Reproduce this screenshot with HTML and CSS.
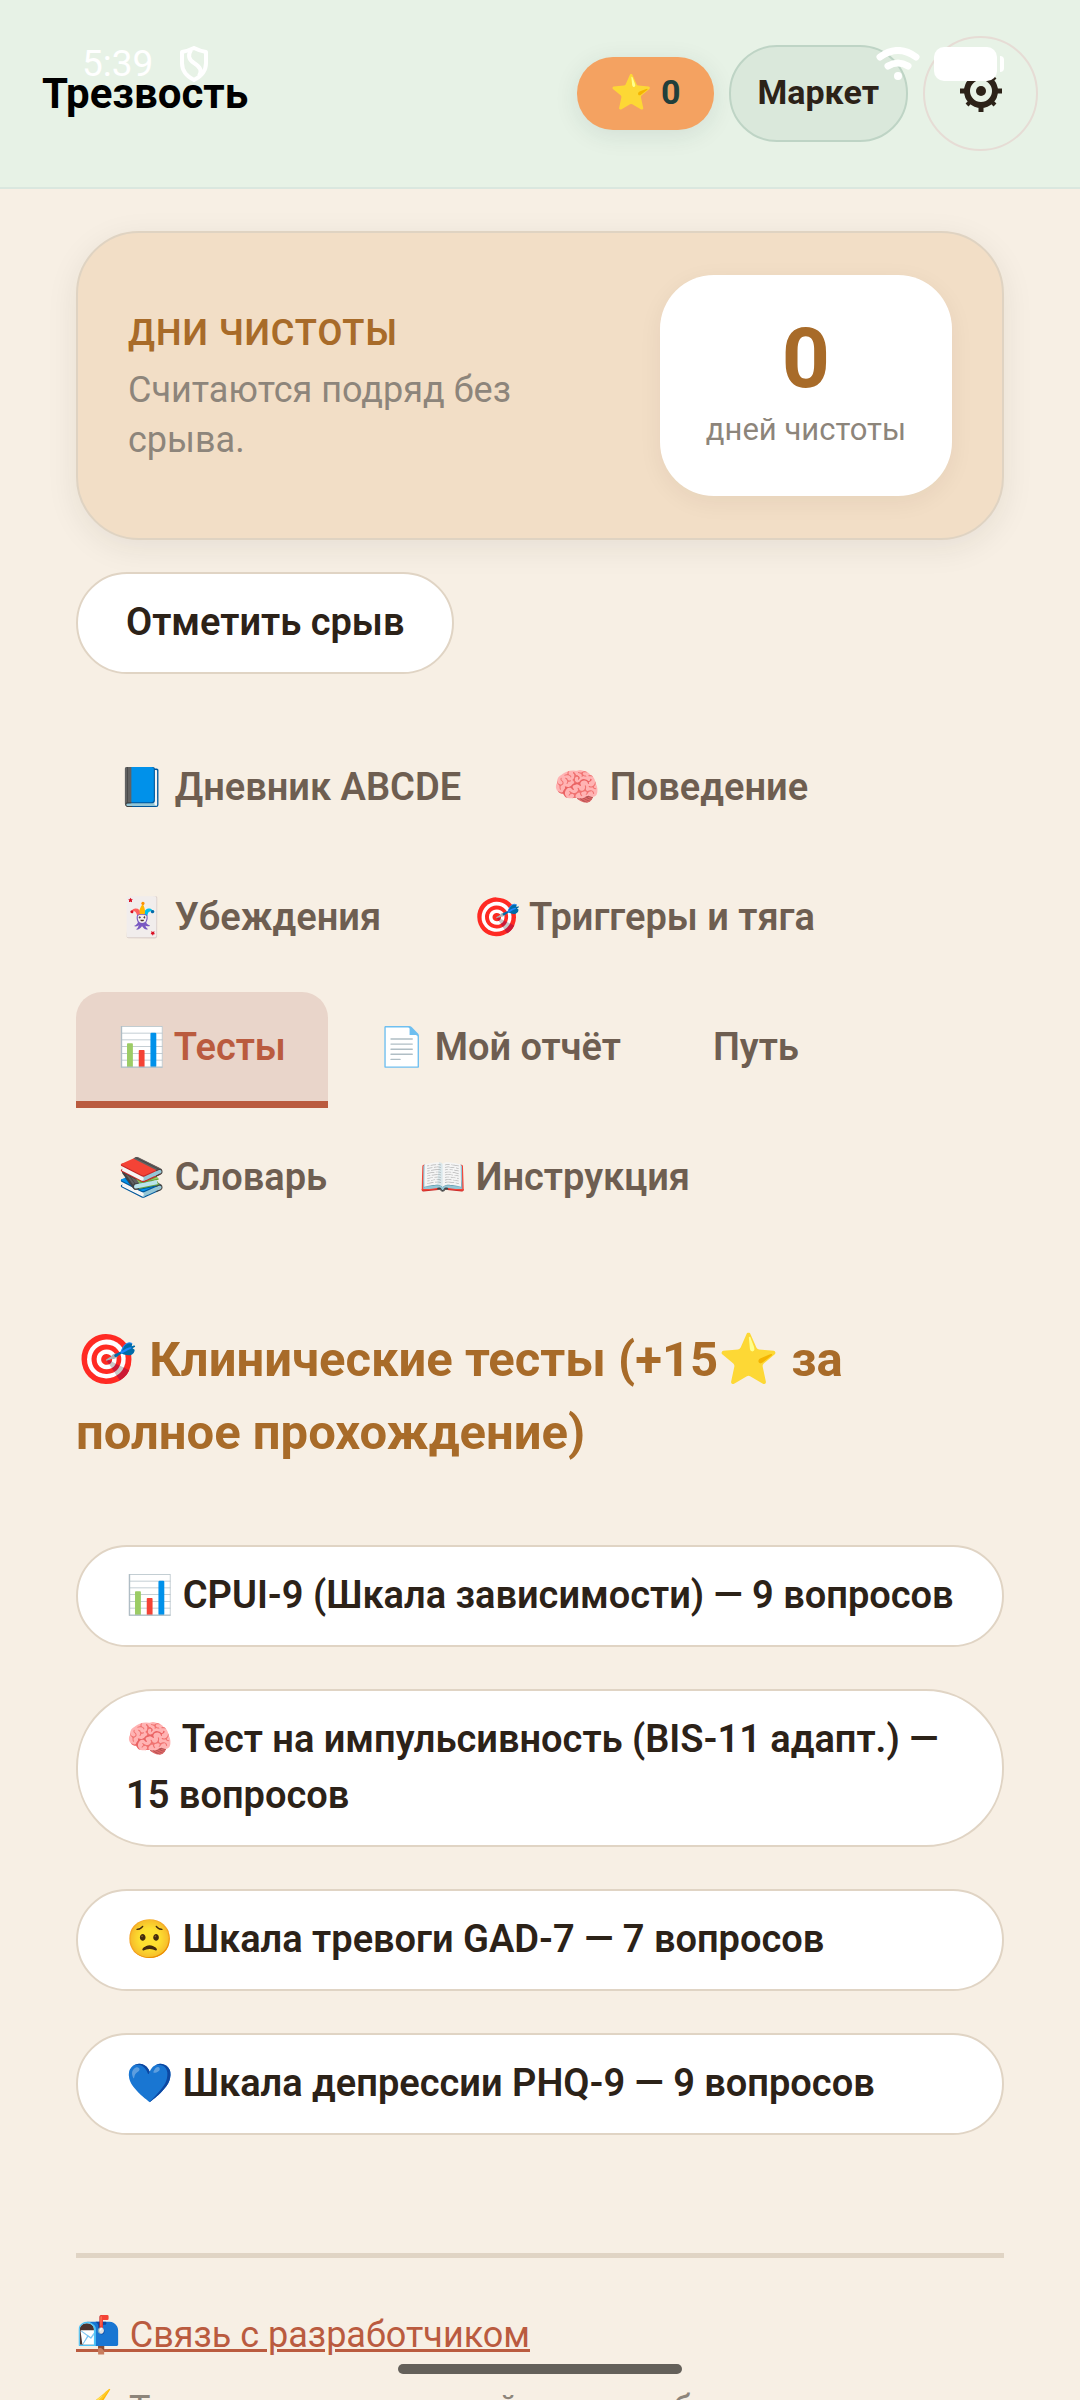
FILE: index.html
```html
<!DOCTYPE html>
<html lang="ru">
<head>
  <meta charset="UTF-8">
  <meta name="viewport" content="width=device-width, initial-scale=1.0">
  <title>Трезвость</title>
  <link rel="stylesheet" href="styles.css">
</head>
<body>
  <div class="status-bar">
    <span class="clock">5:39</span>
    <svg class="status-shield" viewBox="0 0 30 36" fill="none" stroke="currentColor" stroke-width="4" stroke-linejoin="round">
      <path d="M15 2 Q9 5 3 6 V17 Q3 28 15 34 Q27 28 27 17 V6 Q21 5 15 2 Z"/>
      <path d="M12 4 Q7 12 15 17 Q25 23 20 30"/>
    </svg>
    <svg class="status-wifi" viewBox="0 0 44 34" fill="none" stroke="currentColor" stroke-width="7" stroke-linecap="round">
      <path d="M4 10 Q22 -3 40 10"/>
      <path d="M12 19 Q22 13 32 19"/>
      <circle cx="22" cy="29" r="4" fill="currentColor" stroke="none"/>
    </svg>
    <svg class="status-battery" viewBox="0 0 70 34" fill="currentColor">
      <rect width="63" height="34" rx="10"/>
      <path d="M66 9 Q70 9 70 13 V21 Q70 25 66 25 Z"/>
    </svg>
  </div>

  <header class="topbar">
    <div class="brand">Трезвость</div>
    <div class="topbar-actions">
      <span class="stars">⭐ 0</span>
      <button type="button" class="market-btn">Маркет</button>
      <button type="button" class="settings-btn" aria-label="Настройки">
        <svg viewBox="0 0 42 42" fill="none" stroke="currentColor">
          <circle cx="21" cy="21" r="14" stroke-width="6"/>
          <path stroke-width="5" d="M21 0V6M21 36V42M0 21H6M36 21H42"/>
          <path stroke-width="4" d="M7 7L11 11M31 31L35 35M35 7L31 11M11 31L7 35"/>
          <circle cx="21" cy="21" r="5" fill="currentColor" stroke="none"/>
        </svg>
      </button>
    </div>
  </header>

  <main class="container">
    <section class="streak-card">
      <div class="streak-info">
        <div class="streak-title">ДНИ ЧИСТОТЫ</div>
        <p class="streak-text">Считаются подряд без срыва.</p>
      </div>
      <div class="streak-counter">
        <div class="streak-number">0</div>
        <div class="streak-label">дней чистоты</div>
      </div>
    </section>
    <button type="button" class="btn">Отметить срыв</button>

    <nav class="tabs">
      <button type="button" class="tab">📘 Дневник ABCDE</button>
      <button type="button" class="tab">🧠 Поведение</button>
      <button type="button" class="tab">🃏 Убеждения</button>
      <button type="button" class="tab">🎯 Триггеры и тяга</button>
      <button type="button" class="tab active">📊 Тесты</button>
      <button type="button" class="tab">📄 Мой отчёт</button>
      <button type="button" class="tab">Путь</button>
      <button type="button" class="tab">📚 Словарь</button>
      <button type="button" class="tab">📖 Инструкция</button>
    </nav>

    <section class="tests">
      <h2>🎯 Клинические тесты (+15⭐ за полное прохождение)</h2>
      <div class="test-list">
        <button type="button" class="btn">📊 CPUI-9 (Шкала зависимости) — 9 вопросов</button>
        <button type="button" class="btn">🧠 Тест на импульсивность (BIS-11 адапт.) — 15 вопросов</button>
        <button type="button" class="btn">😟 Шкала тревоги GAD-7 — 7 вопросов</button>
        <button type="button" class="btn">💙 Шкала депрессии PHQ-9 — 9 вопросов</button>
      </div>
    </section>

    <footer class="footer">
      <a href="#contact">📬 Связь с разработчиком</a>
      <p>⚡ Терапия зависимостей через работу</p>
    </footer>
  </main>

  <div class="home-indicator"></div>
</body>
</html>
```
FILE: styles.css
```css
* {
  margin: 0;
  padding: 0;
  box-sizing: border-box;
}

html {
  height: 100%;
  overflow: hidden;
}

body {
  height: 100%;
  overflow: hidden;
  font-family: Roboto, "Noto Sans", "Noto Color Emoji", sans-serif;
  font-size: 36px;
  line-height: 1.5;
  color: #2c2218;
  background: #f7efe4;
}

button {
  font: inherit;
  color: inherit;
  cursor: pointer;
}

/* system bar over the page */
.status-bar {
  position: absolute;
  top: 0;
  left: 0;
  right: 0;
  z-index: 10;
  display: flex;
  align-items: center;
  height: 128px;
  padding: 0 76px 0 82px;
  color: #fff;
  pointer-events: none;
}

.clock {
  font-size: 37px;
}

.status-shield {
  width: 30px;
  height: 36px;
  margin-left: 26px;
}

.status-wifi {
  width: 44px;
  height: 34px;
  margin-left: auto;
  margin-right: 14px;
}

.status-battery {
  width: 70px;
  height: 34px;
}

.topbar {
  display: flex;
  align-items: center;
  justify-content: space-between;
  padding: 36px 42px;
  background: #e7f2e6;
  border-bottom: 2px solid #dae7df;
}

.brand {
  font-size: 42px;
  font-weight: 700;
  color: #000;
}

.topbar-actions {
  display: flex;
  align-items: center;
  gap: 15px;
}

.stars {
  padding: 10px 33px 12px;
  border-radius: 36px;
  font-size: 34px;
  font-weight: 700;
  color: #213f3b;
  background: #f4a261;
  box-shadow: 0 5px 24px rgba(33, 63, 59, 0.1);
}

.market-btn {
  padding: 20px 27px 22px;
  border: 2px solid #bed4c5;
  border-radius: 48px;
  font-size: 34px;
  font-weight: 700;
  background: #dae8db;
}

.settings-btn {
  display: flex;
  align-items: center;
  justify-content: center;
  width: 115px;
  height: 115px;
  padding-bottom: 5px;
  border: 2px solid #e6dcd5;
  border-radius: 50%;
  background: none;
}

.settings-btn svg {
  width: 42px;
  height: 42px;
}

.container {
  padding: 42px 76px;
}

.streak-card {
  display: flex;
  align-items: center;
  justify-content: space-between;
  gap: 42px;
  padding: 42px 50px;
  margin-bottom: 32px;
  border: 2px solid #dfd3c2;
  border-radius: 63px;
  background: #f2dec6;
  box-shadow: 0 8px 32px rgba(44, 34, 24, 0.08);
}

.streak-info {
  flex: 0 1 440px;
}

.streak-title {
  margin-bottom: 5px;
  font-weight: 600;
  letter-spacing: 1px;
  color: #a86b29;
}

.streak-text {
  line-height: 50px;
  color: #8d857b;
}

.streak-counter {
  padding: 42px 46px;
  border-radius: 54px;
  text-align: center;
  white-space: nowrap;
  background: #fff;
  box-shadow: 0 6px 24px rgba(44, 34, 24, 0.06);
}

.streak-number {
  font-size: 84px;
  font-weight: 700;
  line-height: 84px;
  color: #a86b29;
}

.streak-label {
  margin-top: 5px;
  font-size: 31px;
  line-height: 48px;
  color: #8d857b;
}

.btn {
  padding: 20px 48px 22px;
  border: 2px solid #e0d4c4;
  border-radius: 78px;
  font-size: 38px;
  font-weight: 600;
  line-height: 56px;
  text-align: left;
  background: #fff;
}

.tabs {
  display: flex;
  flex-wrap: wrap;
  gap: 14px 8px;
  margin-top: 58px;
}

.tab {
  padding: 27px 42px 25px;
  border: 0;
  border-bottom: 7px solid transparent;
  font-size: 38px;
  font-weight: 600;
  color: #6e5e51;
  background: none;
}

.tab.active {
  color: #ba5b3f;
  background: #e9d5ca;
  border-bottom-color: #ba5b3f;
  border-radius: 26px 26px 0 0;
}

h2 {
  margin: 85px 0 76px;
  font-size: 49px;
  font-weight: 700;
  line-height: 73px;
  color: #a86b29;
}

.test-list {
  display: flex;
  flex-direction: column;
  gap: 42px;
}

.footer {
  margin-top: 118px;
  padding-top: 50px;
  border-top: 5px solid #e0d4c4;
  color: #8d857b;
}

.footer a {
  color: #ba5b3f;
}

.footer p {
  margin-top: 20px;
}

.home-indicator {
  position: fixed;
  bottom: 26px;
  left: 50%;
  width: 284px;
  height: 10px;
  border-radius: 5px;
  background: #64605a;
  transform: translateX(-50%);
}
```
